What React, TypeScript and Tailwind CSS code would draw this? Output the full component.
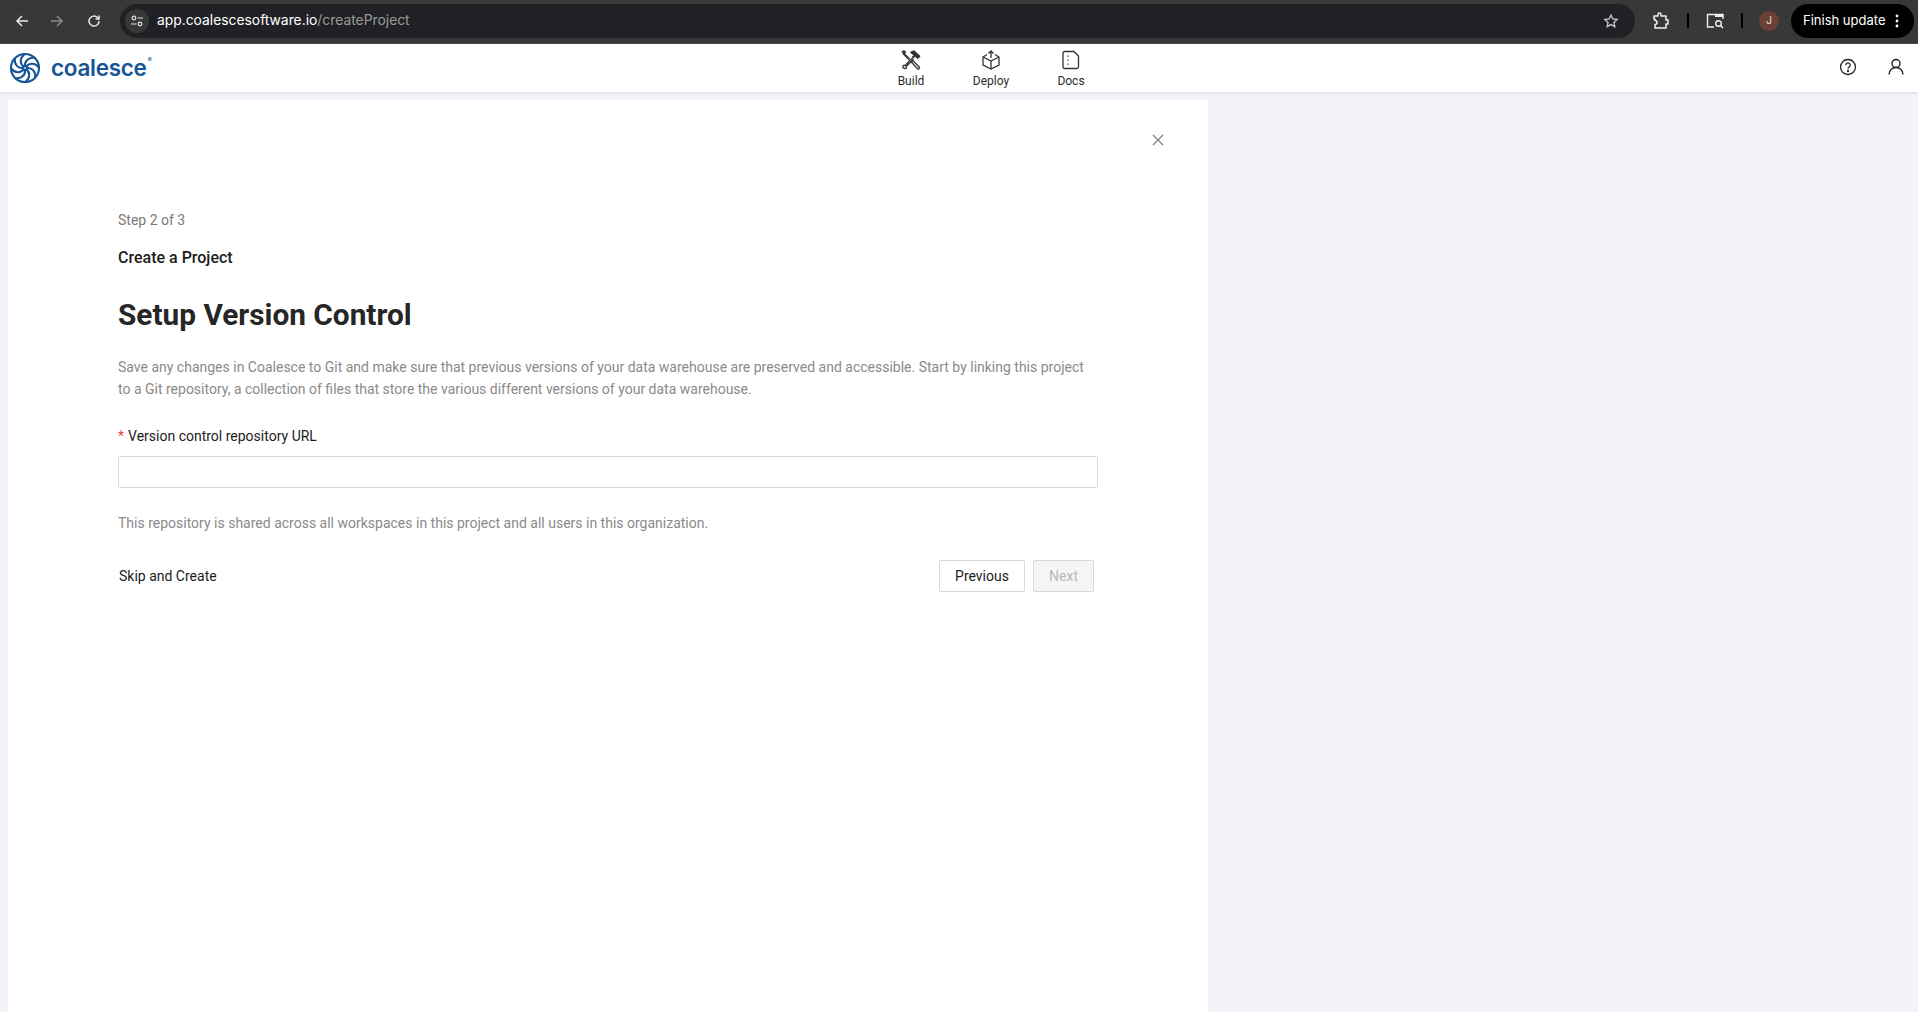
import React from "react";

const Logo = () => (
  <svg width="32" height="32" viewBox="0 0 32 32" fill="none" stroke="#175596" strokeWidth="2.1" strokeLinecap="round">
    <circle cx="16" cy="16" r="14" />
    <circle cx="16" cy="16" r="2" />
    {[0, 45, 90, 135, 180, 225, 270, 315].map((a) => (
      <path key={a} d="M16 14 C 15.500 9.500, 19 5, 25.500 5.800" transform={`rotate(${a} 16 16)`} />
    ))}
  </svg>
);

const NavItem = ({ label, icon }: { label: string; icon: React.ReactNode }) => (
  <div className="flex w-[80px] flex-col items-center">
    <div className="flex h-[24px] items-center justify-center">{icon}</div>
    <span className="mt-[2px] text-[12px] leading-[14px] text-[#2b2b2b]">{label}</span>
  </div>
);

export default function App() {
  return (
    <div className="flex h-[1012px] w-[1918px] flex-col overflow-hidden bg-[#f3f4f9] font-['Roboto',sans-serif]">
      {/* Browser bar */}
      <div className="flex h-[44px] shrink-0 items-center border-b border-[#4a4a4a] bg-[#383838] pb-[2px] pr-[4px]">
        <div className="flex w-[120px] items-center pl-[15px] text-white">
          <svg width="14" height="14" viewBox="0 0 14 14" fill="none" stroke="#e8e8e8" strokeWidth="1.5"><path d="M13 7H2M7 2 2 7l5 5" /></svg>
          <svg className="ml-[21px]" width="14" height="14" viewBox="0 0 14 14" fill="none" stroke="#8a8a8a" strokeWidth="1.5"><path d="M1 7h11M7 2l5 5-5 5" /></svg>
          <svg className="ml-[23px]" width="14" height="14" viewBox="0 0 14 14" fill="none" stroke="#e8e8e8" strokeWidth="1.5"><path d="M12 7a5 5 0 1 1-1.5-3.5L12 5" /><path d="M12 1.5V5H8.5" /></svg>
        </div>
        <div className="flex h-[34px] w-[1515px] items-center rounded-full bg-[#202124] pl-[5px] pr-[16px]">
          <div className="flex h-[24px] w-[24px] items-center justify-center rounded-full bg-[#383838]">
            <svg width="14" height="14" viewBox="0 0 14 14" fill="none" stroke="#e4e4e4" strokeWidth="1.2"><circle cx="4" cy="4" r="1.8" /><path d="M7.5 4H13M1 10h5.5" /><circle cx="10" cy="10" r="1.8" /></svg>
          </div>
          <span className="ml-[8px] font-['Inter',sans-serif] text-[13.85px] text-white">app.coalescesoftware.io<span className="text-[#9a9a9a]">/createProject</span></span>
          <svg className="ml-auto" width="16" height="16" viewBox="0 0 24 24" fill="none" stroke="#c8c8c8" strokeWidth="2"><path d="M12 3l2.8 5.9 6.4.8-4.7 4.4 1.2 6.4L12 17.4 6.3 20.5l1.2-6.4-4.7-4.4 6.4-.8z" /></svg>
        </div>
        <svg className="ml-[17px]" width="18" height="18" viewBox="0 0 18 18" fill="none" stroke="#f0f0f0" strokeWidth="1.5"><path d="M2 4h4V2.5a1.5 1.5 0 0 1 3 0V4h5v4h2v4h-2v4H3v-3.5a2 2 0 0 0 0-4V7H2z" strokeLinejoin="round" /></svg>
        <div className="ml-[17px] h-[15px] w-[2px] bg-black" />
        <svg className="ml-[17px]" width="18" height="18" viewBox="0 0 18 18" fill="none" stroke="#f0f0f0" strokeWidth="1.4"><path d="M8 15H1.5V2.5H17V7" /><rect x="9" y="2" width="8" height="3" fill="#f0f0f0" stroke="none" /><circle cx="12.5" cy="11.5" r="2.8" /><path d="M14.5 13.5l2.5 2.5" /></svg>
        <div className="ml-[17px] h-[15px] w-[2px] bg-black" />
        <div className="ml-[16px] flex h-[20px] w-[20px] items-center justify-center rounded-full bg-[#6b4035] font-['Inter',sans-serif] text-[10px] text-[#e8e0dc]">J</div>
        <div className="ml-[12px] flex h-[34px] w-[123px] items-center rounded-full bg-black pl-[12px] text-white">
          <span className="font-['Inter',sans-serif] text-[13px]">Finish update</span>
          <svg className="ml-[10px]" width="4" height="14" viewBox="0 0 4 14" fill="white"><circle cx="2" cy="2" r="1.4" /><circle cx="2" cy="7" r="1.4" /><circle cx="2" cy="12" r="1.4" /></svg>
        </div>
      </div>

      {/* App header */}
      <div className="flex h-[48px] shrink-0 items-center justify-between bg-white pl-[9px] pr-[13px] shadow-[0_1px_3px_rgba(0,0,0,0.12)]">
        <div className="flex w-[400px] items-center">
          <Logo />
          <span className="relative ml-[10px] font-['Inter',sans-serif] text-[22.5px] font-semibold leading-[28px] tracking-[-0.3px] text-[#175596]">
            coalesce
            <span className="absolute right-[-5px] top-[3px] text-[6px] leading-none">®</span>
          </span>
        </div>
        <div className="ml-[68px] flex items-center">
          <NavItem label="Build" icon={
            <svg width="20" height="20" viewBox="0 0 20 20" fill="none" stroke="#333" strokeWidth="1.3">
              <path d="M2.200 3.200 8.500 9.500" strokeWidth="2.200" />
              <path d="M1.300 1.800 3 .8l1.500 1.500-1.300 1.500z" fill="#333" />
              <path d="M11 8.500 4 15.500l-1.800-.2-.5 2 1.700 1.400 1.900-.5-.1-1.700 7-7z" strokeLinejoin="round" />
              <path d="M11.500 7.800 13.500 5.800" strokeWidth="2.200" />
              <path d="M9.800 2.400 13 .9l5.700 5.300-2 2.100-3.500-3.200-1-.8z" fill="#333" strokeLinejoin="round" />
              <path d="M10.500 12.300 12 10.800l6.200 6.200a1 1 0 0 1 0 1.400l-.3.300a1 1 0 0 1-1.400 0z" strokeLinejoin="round" />
            </svg>
          } />
          <NavItem label="Deploy" icon={
            <svg width="20" height="20" viewBox="0 0 20 20" fill="none" stroke="#333" strokeWidth="1.3"><path d="M6 4.500 2 7v8l8 4 8-4V7l-4-2.500" /><path d="M2 7l8 4 8-4M10 11v8M10 8V1M7.500 3.500 10 1l2.500 2.500" /></svg>
          } />
          <NavItem label="Docs" icon={
            <svg width="18" height="20" viewBox="0 0 18 20" fill="none" stroke="#333" strokeWidth="1.3"><path d="M2.500 1.500H12l4.500 4.500v11a1.500 1.500 0 0 1-1.500 1.500H2.500A1.500 1.500 0 0 1 1 17V3a1.500 1.500 0 0 1 1.500-1.500z" /><path d="M6 5.500v1.200M6 9.500v1.200M6 13.500v1.200" /></svg>
          } />
        </div>
        <div className="mb-[2px] flex w-[400px] items-center justify-end gap-[30px]">
          <svg width="18" height="18" viewBox="0 0 18 18" fill="none" stroke="#222" strokeWidth="1.300"><circle cx="9" cy="9" r="7.500" /><path d="M6.800 7.200a2.200 2.200 0 1 1 3.400 1.800c-.8.500-1.200.9-1.200 1.800" /><circle cx="9" cy="13" r=".5" fill="#222" /></svg>
          <svg width="18" height="18" viewBox="0 0 18 18" fill="none" stroke="#222" strokeWidth="1.400"><circle cx="9" cy="5.500" r="4" /><path d="M2 16.500c.5-4 3-7 7-7s6.500 3 7 7" /></svg>
        </div>
      </div>

      {/* Panel */}
      <div className="mt-[8px] ml-[8px] flex w-[1200px] flex-1 flex-col bg-white pl-[110px] pr-[110px]">
        <div className="mr-[-66px] flex justify-end pt-[34px]">
          <svg width="12" height="12" viewBox="0 0 12 12" stroke="#808080" strokeWidth="1.200"><path d="M1 1l10 10M11 1 1 11" /></svg>
        </div>
        <div className="mt-[64px] text-[14px] leading-[20px] text-[#7a7a7a]">Step 2 of 3</div>
        <div className="mt-[18px] text-[16px] font-medium leading-[20px] text-[#1c1c1c]">Create a Project</div>
        <h1 className="mt-[27px] text-[29.8px] font-bold leading-[40px] text-[#262626]">Setup Version Control</h1>
        <p className="mt-[21px] text-[14px] leading-[22px] text-[#8a8a8a]">
          Save any changes in Coalesce to Git and make sure that previous versions of your data warehouse are preserved and accessible. Start by linking this project to a Git repository, a collection of files that store the various different versions of your data warehouse.
        </p>
        <label className="mt-[26px] text-[14px] leading-[20px] text-[#1c1c1c]"><span className="mr-[4px] text-[#e5484d]">*</span>Version control repository URL</label>
        <input className="mt-[10px] h-[32px] w-full rounded-[2px] border border-[#d9d9d9] bg-white" />
        <div className="mt-[25px] text-[14px] leading-[20px] text-[#8a8a8a]">This repository is shared across all workspaces in this project and all users in this organization.</div>
        <div className="mt-[27px] flex items-center justify-between pl-[1px] pr-[4px]">
          <span className="text-[14px] leading-[20px] text-[#1c1c1c]">Skip and Create</span>
          <div className="flex gap-[8px]">
            <button className="h-[32px] w-[86px] rounded-[2px] border border-[#d9d9d9] bg-white text-[14px] text-[#1c1c1c]">Previous</button>
            <button className="h-[32px] w-[61px] rounded-[2px] border border-[#d9d9d9] bg-[#f5f5f5] text-[14px] text-[#b8b8b8]">Next</button>
          </div>
        </div>
      </div>
    </div>
  );
}
